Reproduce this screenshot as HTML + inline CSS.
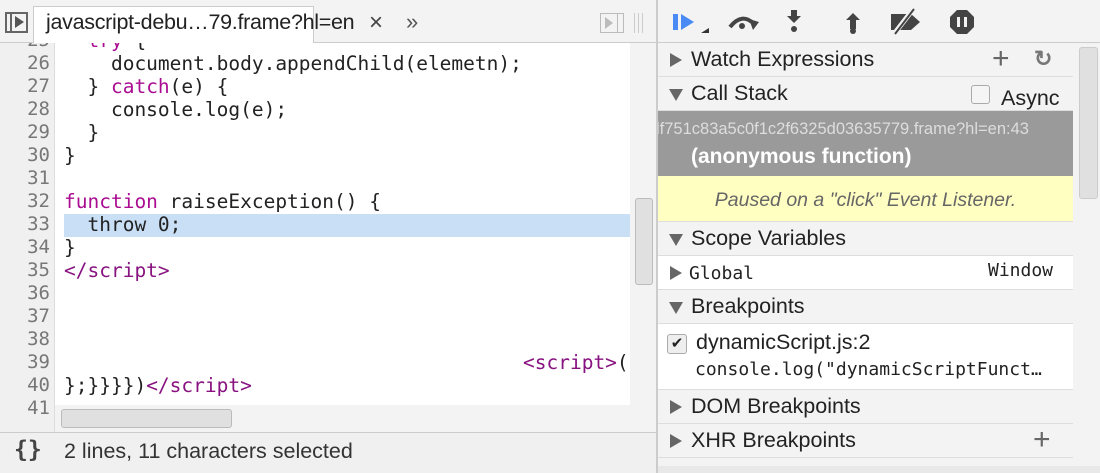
<!DOCTYPE html>
<html><head><style>
*{margin:0;padding:0;box-sizing:border-box}
body{width:1100px;height:473px;overflow:hidden;background:#f3f3f3;font-family:"Liberation Sans",sans-serif;position:relative}
.abs{position:absolute}
.mono{font-family:"DejaVu Sans Mono","Liberation Mono",monospace}
.code{position:absolute;left:0;top:43px;width:656px;height:389px;background:#fff;overflow:hidden}
.gut{position:absolute;left:0;top:0;width:55px;height:389px;background:#f0f0f0;border-right:1px solid #ddd}
.ln{position:absolute;left:0;width:50px;text-align:right;color:#777;font-size:19px;font-family:"DejaVu Sans Mono",monospace}
.cl{position:absolute;left:64px;font-size:19.5px;font-family:"DejaVu Sans Mono",monospace;color:#222;white-space:pre}
.k{color:#aa0d91}.t{color:#881280}
.sec{position:absolute;left:658px;width:415px;height:34px;border-bottom:1px solid #ddd;background:#f3f3f3;font-size:21.5px;color:#222}
.sec .tri{position:absolute;left:12px;top:10px;width:0;height:0;border-left:12px solid #666;border-top:7px solid transparent;border-bottom:7px solid transparent}
.sec .trd{position:absolute;left:11px;top:12px;width:0;height:0;border-top:12px solid #666;border-left:7px solid transparent;border-right:7px solid transparent}
.sec span.lb{position:absolute;left:33px;top:4px}
</style></head><body>
<!-- left toolbar -->
<div class="abs" style="left:0;top:0;width:656px;height:43px;background:#f3f3f3;border-bottom:1px solid #ccc"></div>
<div class="abs" style="left:5px;top:12px;width:23px;height:21px;border:2px solid #666;"></div>
<div class="abs" style="left:10px;top:12px;width:2px;height:21px;background:#666"></div>
<div class="abs" style="left:15px;top:16px;width:0;height:0;border-left:9px solid #555;border-top:6px solid transparent;border-bottom:6px solid transparent"></div>
<div class="abs" style="left:33px;top:6px;width:281px;height:38px;background:#fff;border:1px solid #ccc;border-bottom:none"></div>
<div class="abs" style="left:46px;top:10px;font-size:21.5px;color:#222;letter-spacing:-0.3px">javascript-debu…79.frame?hl=en</div>
<div class="abs" style="left:369px;top:9px;font-size:24px;color:#444">×</div>
<div class="abs" style="left:406px;top:9px;font-size:22px;color:#555">»</div>
<div class="abs" style="left:600px;top:13px;width:24px;height:20px;border:1px solid #bbb"></div>
<div class="abs" style="left:605px;top:17px;width:0;height:0;border-left:8px solid #bbb;border-top:6px solid transparent;border-bottom:6px solid transparent"></div>
<div class="abs" style="left:617px;top:13px;width:1px;height:20px;background:#bbb"></div>
<div class="abs" style="left:634px;top:13px;width:9px;height:20px;border-left:1px solid #ccc;border-right:1px solid #ccc"></div>
<div class="abs" style="left:638px;top:13px;width:1px;height:20px;background:#ccc"></div>
<!-- code -->
<div class="code">
<div class="gut"></div>
<div class="abs" style="left:64px;top:171px;width:566px;height:23px;background:#c8dff5"></div>
<div class="abs" style="left:630px;top:0;width:26px;height:389px;background:#f3f3f3"></div>
<div class="abs" style="left:635px;top:155px;width:18px;height:87px;background:#e0e0e0;border:1px solid #bbb;border-radius:3px"></div>
<div class="abs" style="left:55px;top:362px;width:575px;height:27px;background:#f3f3f3"></div>
<div class="abs" style="left:61px;top:366px;width:171px;height:19px;background:#e0e0e0;border:1px solid #bbb;border-radius:3px"></div>
<div class="ln" style="top:-14px">25</div><div class="cl" style="top:-14px">  <span class="k">try</span> {</div>
<div class="ln" style="top:9px">26</div><div class="cl" style="top:9px">    document.body.appendChild(elemetn);</div>
<div class="ln" style="top:32px">27</div><div class="cl" style="top:32px">  } <span class="k">catch</span>(e) {</div>
<div class="ln" style="top:55px">28</div><div class="cl" style="top:55px">    console.log(e);</div>
<div class="ln" style="top:78px">29</div><div class="cl" style="top:78px">  }</div>
<div class="ln" style="top:101px">30</div><div class="cl" style="top:101px">}</div>
<div class="ln" style="top:124px">31</div>
<div class="ln" style="top:147px">32</div><div class="cl" style="top:147px"><span class="k">function</span> raiseException() {</div>
<div class="ln" style="top:170px">33</div><div class="cl" style="top:170px">  throw 0;</div>
<div class="ln" style="top:193px">34</div><div class="cl" style="top:193px">}</div>
<div class="ln" style="top:216px">35</div><div class="cl" style="top:216px"><span class="t">&lt;/script&gt;</span></div>
<div class="ln" style="top:239px">36</div>
<div class="ln" style="top:262px">37</div>
<div class="ln" style="top:285px">38</div>
<div class="ln" style="top:308px">39</div><div class="cl" style="top:308px;left:523px"><span class="t">&lt;script&gt;</span>(</div>
<div class="ln" style="top:331px">40</div><div class="cl" style="top:331px">};}}}})<span class="t">&lt;/script&gt;</span></div>
<div class="ln" style="top:354px">41</div>
</div>
<!-- status -->
<div class="abs" style="left:0;top:432px;width:656px;height:41px;background:#f0f0f0;border-top:1px solid #ccc"></div>
<div class="abs mono" style="left:14px;top:437px;font-size:23px;color:#444;font-weight:bold">{}</div>
<div class="abs" style="left:64px;top:439px;font-size:21.5px;color:#333">2 lines, 11 characters selected</div>
<!-- divider -->
<div class="abs" style="left:656px;top:0;width:2px;height:473px;background:#ccc"></div>
<!-- right toolbar -->
<div class="abs" style="left:658px;top:0;width:442px;height:43px;background:#f3f3f3;border-bottom:1px solid #ccc"></div>
<svg class="abs" style="left:658px;top:0" width="340" height="43">
<rect x="15" y="14" width="5" height="16" fill="#4a8af4"/><path d="M23 14 L36 22 L23 30Z" fill="#4a8af4"/>
<path d="M43 33 L51 33 L51 28Z" fill="#333"/>
<path d="M72 27 Q84 12 96 24" stroke="#444" stroke-width="4" fill="none"/><path d="M91 19 L101 22 L95 30Z" fill="#444"/><circle cx="84" cy="26" r="3" fill="#444"/>
<path d="M133 10 h6 v6 h4 l-7 7 -7 -7 h4Z" fill="#444"/><circle cx="136" cy="29" r="3" fill="#444"/>
<path d="M192 29 v-9 h-4 l7 -7 7 7 h-4 v9Z" fill="#444"/><circle cx="195" cy="31" r="3" fill="#444"/>
<path d="M233 14 L253 14 L262 22 L253 30 L233 30Z" fill="#444"/><path d="M236 34 L256 8" stroke="#f3f3f3" stroke-width="5"/><path d="M237 34 L256 9" stroke="#444" stroke-width="2"/>
<path d="M299 10 L309 10 L316 17 L316 27 L309 34 L299 34 L292 27 L292 17Z" fill="#444"/><rect x="299" y="17" width="3" height="10" fill="#f3f3f3"/><rect x="306" y="17" width="3" height="10" fill="#f3f3f3"/>
</svg>
<!-- right sections -->
<div class="sec" style="top:43px"><span class="tri"></span><span class="lb">Watch Expressions</span><span style="position:absolute;left:334px;top:-1px;font-size:30px;color:#666">+</span><span style="position:absolute;left:376px;top:3px;font-size:22px;color:#777;font-weight:bold">↻</span></div>
<div class="sec" style="top:77px"><span class="trd"></span><span class="lb">Call Stack</span><span style="position:absolute;left:313px;top:8px;width:19px;height:19px;border:1px solid #aaa;border-radius:3px;background:#f5f5f5"></span><span style="position:absolute;left:343px;top:9px">Async</span></div>
<div class="abs" style="left:658px;top:111px;width:415px;height:65px;background:#9a9a9a;overflow:hidden">
<div class="abs" style="left:-2px;top:9px;font-size:16.5px;color:#ddd;white-space:nowrap">lf751c83a5c0f1c2f6325d03635779.frame?hl=en:43</div>
<div class="abs" style="left:33px;top:34px;font-size:21px;color:#fff;font-weight:bold">(anonymous function)</div></div>
<div class="abs" style="left:658px;top:176px;width:415px;height:46px;background:#ffffc2;border-bottom:1px solid #ddd;text-align:center;font-style:italic;font-size:19.5px;color:#666;padding-top:13px">Paused on a "click" Event Listener.</div>
<div class="sec" style="top:222px"><span class="trd"></span><span class="lb">Scope Variables</span></div>
<div class="sec" style="top:256px;background:#fff"><span class="tri"></span><span class="lb mono" style="left:31px;top:7px;font-size:18px">Global</span><span class="mono" style="position:absolute;left:330px;top:4px;font-size:18px">Window</span></div>
<div class="sec" style="top:290px"><span class="trd"></span><span class="lb">Breakpoints</span></div>
<div class="sec" style="top:324px;height:66px;background:#fff"><span style="position:absolute;left:9px;top:10px;width:20px;height:20px;border:1px solid #aaa;border-radius:3px;background:#eee;font-size:15px;text-align:center;line-height:18px">✔</span><span style="position:absolute;left:38px;top:6px">dynamicScript.js:2</span><span class="mono" style="position:absolute;left:37px;top:35px;font-size:18px;white-space:nowrap">console.log("dynamicScriptFunct…</span></div>
<div class="sec" style="top:390px"><span class="tri"></span><span class="lb">DOM Breakpoints</span></div>
<div class="sec" style="top:424px"><span class="tri"></span><span class="lb">XHR Breakpoints</span><span style="position:absolute;left:375px;top:-1px;font-size:30px;color:#666">+</span></div>
<div class="sec" style="top:458px;height:15px"></div>
<div class="abs" style="left:658px;top:466px;width:442px;height:7px;background:#e8e8e8"></div>
<!-- right scrollbar -->
<div class="abs" style="left:1079px;top:47px;width:19px;height:152px;background:#e0e0e0;border:1px solid #ccc;border-radius:3px"></div>
</body></html>
